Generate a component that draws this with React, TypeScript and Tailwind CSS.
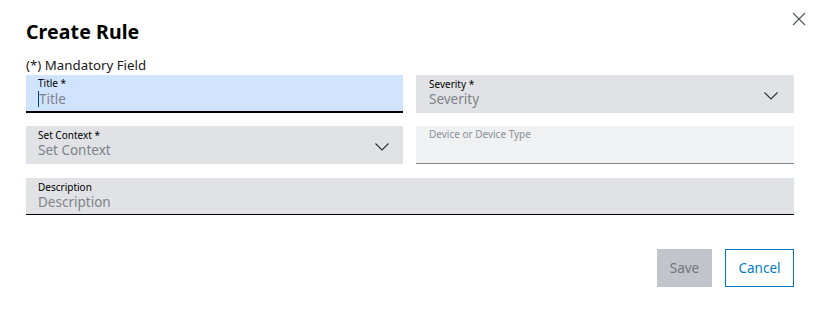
import React from "react";

const font = { fontFamily: '"Noto Sans", "Open Sans", Arial, sans-serif' };

function Chevron() {
  return (
    <svg width="14" height="8" viewBox="0 0 14 8" fill="none" className="shrink-0">
      <path d="M0.5 0.5 L7 7 L13.5 0.5" stroke="#2b2f33" strokeWidth="1.1" />
    </svg>
  );
}

export default function App() {
  return (
    <div className="relative w-[819px] h-[313px] bg-white text-[#000]" style={font}>
      <button className="absolute right-[13px] top-[12px] w-[14px] h-[14px]">
        <svg width="14" height="14" viewBox="0 0 14 14">
          <path d="M1 1 L13 13 M13 1 L1 13" stroke="#55595d" strokeWidth="1.2" />
        </svg>
      </button>
      <div className="pl-[26px] pr-[25px] pt-[19px]">
        <h1 className="text-[19.5px] leading-[26px] font-bold text-[#000] tracking-[0.1px]">Create Rule</h1>
        <div className="mt-[12px] text-[13.3px] leading-[17px] text-[#1a1a1a]">(*) Mandatory Field</div>
        <div className="grid grid-cols-[377px_1fr] gap-x-[13px] mt-[1px]">
          <div className="h-[38px] bg-[#d1e4ff] border-b-2 border-[#000] px-[12px] pt-[2px]">
            <div className="text-[10px] leading-[12px] text-[#000]">Title *</div>
            <div className="text-[13.5px] leading-[20px] text-[#7d8389] flex items-center">
              <span className="w-[1px] h-[16px] bg-[#004975]" />
              <span>Title</span>
            </div>
          </div>
          <div className="h-[38px] bg-[#e0e2e5] pl-[13px] pr-[16px] pt-[3px] flex items-center">
            <div className="flex-1 self-start">
              <div className="text-[10px] leading-[12px] text-[#000]">Severity *</div>
              <div className="text-[13.5px] leading-[19px] text-[#7d8389]">Severity</div>
            </div>
            <Chevron />
          </div>
        </div>
        <div className="grid grid-cols-[377px_1fr] gap-x-[13px] mt-[13px]">
          <div className="h-[38px] bg-[#e0e2e5] pl-[12px] pr-[14px] pt-[3px] flex items-center">
            <div className="flex-1 self-start">
              <div className="text-[10px] leading-[12px] text-[#000]">Set Context *</div>
              <div className="text-[13.5px] leading-[19px] text-[#7d8389]">Set Context</div>
            </div>
            <Chevron />
          </div>
          <div className="h-[38px] bg-[#eff1f2] border-b border-[#7d8389] px-[13px] pt-[2px]">
            <div className="text-[10px] leading-[12px] text-[#8a9097]">Device or Device Type</div>
          </div>
        </div>
        <div className="mt-[14px] h-[37px] bg-[#e0e2e5] border-b border-[#000] px-[12px] pt-[3px]">
          <div className="text-[10px] leading-[12px] text-[#000]">Description</div>
          <div className="text-[13.5px] leading-[19px] text-[#7d8389]">Description</div>
        </div>
        <div className="flex justify-end gap-[13px] mt-[34px]">
          <button className="w-[55px] h-[38px] bg-[#c1c5cb] text-[#71767c] text-[13.5px]">Save</button>
          <button className="w-[69px] h-[38px] border border-[#007bc0] text-[#007bc0] text-[13.5px]">Cancel</button>
        </div>
      </div>
    </div>
  );
}
